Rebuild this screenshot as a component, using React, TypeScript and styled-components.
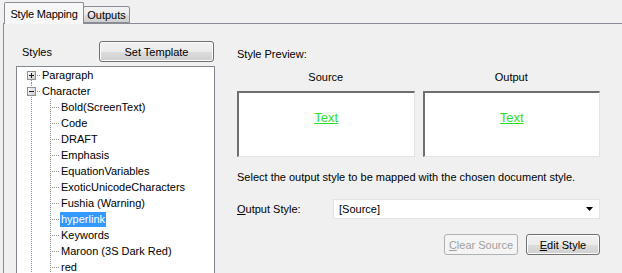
import styled, { createGlobalStyle } from 'styled-components';

const GlobalStyle = createGlobalStyle`
  html, body {
    margin: 0;
    padding: 0;
    background: #f0f0f0;
  }
  body {
    font-family: "Liberation Sans", Arial, sans-serif;
    font-size: 11px;
    color: #000;
  }
`;

const Window = styled.div`
  width: 622px;
  height: 273px;
  overflow: hidden;
  display: flex;
  flex-direction: column;
  background: #f0f0f0;
`;

const TabStrip = styled.div`
  height: 23px;
  display: flex;
  align-items: flex-end;
  padding-left: 4px;
  position: relative;
  z-index: 1;
`;

const Tab = styled.div<{ $active?: boolean }>`
  display: flex;
  align-items: center;
  justify-content: center;
  box-sizing: border-box;
  border: 1px solid #898c95;
  border-bottom: ${({ $active }) => ($active ? 'none' : '1px solid #898c95')};
  height: ${({ $active }) => ($active ? '22px' : '17px')};
  width: ${({ $active }) => ($active ? '80px' : '47px')};
  margin-bottom: ${({ $active }) => ($active ? '-1px' : '0')};
  margin-left: ${({ $active }) => ($active ? '0' : '-1px')};
  padding-top: ${({ $active }) => ($active ? '0' : '1px')};
  border-radius: 2px 2px 0 0;
  letter-spacing: ${({ $active }) => ($active ? '-0.2px' : '0')};
  background: ${({ $active }) =>
    $active ? '#f7f7f7' : 'linear-gradient(#f2f2f2 0%, #ebebeb 50%, #dddddd 51%, #cfcfcf 100%)'};
`;

const Panel = styled.div`
  flex: 1;
  margin-left: 3px;
  border-top: 1px solid #898c95;
  border-left: 1px solid #898c95;
  padding-left: 12px;
  display: grid;
  grid-template-columns: 199px 363px;
  column-gap: 22px;
  min-height: 0;
`;

const LeftColumn = styled.div`
  display: flex;
  flex-direction: column;
  min-height: 0;
`;

const StylesHeader = styled.div`
  height: 42px;
  box-sizing: border-box;
  display: flex;
  align-items: flex-end;
  justify-content: space-between;
  padding: 0 1px 4px 6px;
`;

const StylesLabel = styled.span`
  line-height: 20px;
`;

const Button = styled.button<{ $width: number; $disabled?: boolean }>`
  width: ${({ $width }) => $width}px;
  height: 21px;
  box-sizing: border-box;
  font-family: "Liberation Sans", Arial, sans-serif;
  font-size: 11px;
  padding: 0;
  border-radius: 3px;
  border: 1px solid ${({ $disabled }) => ($disabled ? '#adb2b5' : '#707070')};
  color: ${({ $disabled }) => ($disabled ? '#a0a0a0' : '#000')};
  background: ${({ $disabled }) =>
    $disabled ? '#f4f4f4' : 'linear-gradient(#f2f2f2 0%, #ebebeb 50%, #dddddd 51%, #cfcfcf 100%)'};
  box-shadow: ${({ $disabled }) => ($disabled ? 'none' : 'inset 0 0 0 1px #fcfcfc')};
`;

const Mnemonic = styled.span`
  text-decoration: underline;
`;

const TreeBox = styled.div`
  flex: 1;
  border: 1px solid #828790;
  border-bottom: none;
  background: #fff;
  padding: 0 0 0 5px;
  overflow: hidden;
`;

const TreeRow = styled.div`
  display: flex;
  align-items: center;
  height: 16px;
`;

const TreeLabel = styled.span<{ $selected?: boolean }>`
  line-height: 15px;
  padding: 0 1px;
  white-space: nowrap;
  background: ${({ $selected }) => ($selected ? '#3399ff' : 'transparent')};
  color: ${({ $selected }) => ($selected ? '#fff' : '#000')};
`;

const RightColumn = styled.div`
  display: flex;
  flex-direction: column;
  padding-top: 23px;
`;

const Caption = styled.div`
  line-height: 14px;
`;

const PreviewGrid = styled.div`
  display: grid;
  grid-template-columns: 1fr 1fr;
  column-gap: 8px;
  row-gap: 7px;
  margin-top: 9px;
`;

const PreviewTitle = styled.div`
  text-align: center;
  line-height: 14px;
`;

const PreviewBox = styled.div`
  height: 66px;
  box-sizing: border-box;
  background: #fff;
  border-top: 2px solid #6f6f6f;
  border-left: 2px solid #6f6f6f;
  border-right: 1px solid #e3e3e3;
  border-bottom: 1px solid #e3e3e3;
  display: flex;
  align-items: center;
  justify-content: center;
  padding-bottom: 15px;
`;

const SampleLink = styled.span`
  color: #2ee02e;
  font-size: 13px;
  text-decoration: underline;
`;

const Hint = styled.div`
  line-height: 14px;
  margin-top: 13px;
`;

const FieldRow = styled.div`
  display: grid;
  grid-template-columns: 96px 1fr;
  align-items: center;
  margin-top: 15px;
`;

const Select = styled.div`
  height: 20px;
  box-sizing: border-box;
  border: 1px solid #e3e3e3;
  background: #fff;
  display: flex;
  align-items: center;
  justify-content: space-between;
  padding: 0 6px 0 5px;
`;

const ButtonRow = styled.div`
  display: flex;
  justify-content: flex-end;
  gap: 8px;
  margin-top: 15px;
`;

type Line = 'none' | 'full' | 'down';

const TreeCell = ({ line, branch, box }: { line: Line; branch?: boolean; box?: 'plus' | 'minus' }) => (
  <svg width="19" height="16" style={{ flex: 'none', display: 'block' }}>
    {line !== 'none' && (
      <line
        x1="9.5"
        y1={line === 'down' ? 9 : 0}
        x2="9.5"
        y2="16"
        stroke="#909090"
        strokeDasharray="1 1"
      />
    )}
    {branch && (
      <line x1={box ? 15 : 11} y1="8.5" x2="19" y2="8.5" stroke="#909090" strokeDasharray="1 1" />
    )}
    {box && (
      <g>
        <defs>
          <linearGradient id="exp" x1="0" y1="0" x2="1" y2="1">
            <stop offset="0" stopColor="#ffffff" />
            <stop offset="1" stopColor="#c8c8c8" />
          </linearGradient>
        </defs>
        <rect x="5.5" y="4.5" width="8" height="8" fill="url(#exp)" stroke="#919191" />
        <line x1="7" y1="8.5" x2="12" y2="8.5" stroke="#1a1a1a" />
        {box === 'plus' && <line x1="9.5" y1="6" x2="9.5" y2="11" stroke="#1a1a1a" />}
      </g>
    )}
  </svg>
);

const characterStyles = [
  'Bold(ScreenText)',
  'Code',
  'DRAFT',
  'Emphasis',
  'EquationVariables',
  'ExoticUnicodeCharacters',
  'Fushia (Warning)',
  'hyperlink',
  'Keywords',
  'Maroon (3S Dark Red)',
  'red',
];

export default function App() {
  return (
    <Window>
      <GlobalStyle />
      <TabStrip>
        <Tab $active>Style Mapping</Tab>
        <Tab>Outputs</Tab>
      </TabStrip>
      <Panel>
        <LeftColumn>
          <StylesHeader>
            <StylesLabel>Styles</StylesLabel>
            <Button $width={115}>Set Template</Button>
          </StylesHeader>
          <TreeBox>
            <TreeRow>
              <TreeCell line="down" branch box="plus" />
              <TreeLabel>Paragraph</TreeLabel>
            </TreeRow>
            <TreeRow>
              <TreeCell line="full" branch box="minus" />
              <TreeLabel>Character</TreeLabel>
            </TreeRow>
            {characterStyles.map((name) => (
              <TreeRow key={name}>
                <TreeCell line="full" />
                <TreeCell line="full" branch />
                <TreeLabel $selected={name === 'hyperlink'}>{name}</TreeLabel>
              </TreeRow>
            ))}
          </TreeBox>
        </LeftColumn>
        <RightColumn>
          <Caption>Style Preview:</Caption>
          <PreviewGrid>
            <PreviewTitle>Source</PreviewTitle>
            <PreviewTitle>Output</PreviewTitle>
            <PreviewBox>
              <SampleLink>Text</SampleLink>
            </PreviewBox>
            <PreviewBox>
              <SampleLink>Text</SampleLink>
            </PreviewBox>
          </PreviewGrid>
          <Hint>Select the output style to be mapped with the chosen document style.</Hint>
          <FieldRow>
            <span>
              <Mnemonic>O</Mnemonic>utput Style:
            </span>
            <Select>
              <span>[Source]</span>
              <svg width="7" height="4">
                <path d="M0 0 H7 L3.5 4 Z" fill="#000" />
              </svg>
            </Select>
          </FieldRow>
          <ButtonRow>
            <Button $width={74} $disabled>
              <Mnemonic>C</Mnemonic>lear Source
            </Button>
            <Button $width={74}>
              <Mnemonic>E</Mnemonic>dit Style
            </Button>
          </ButtonRow>
        </RightColumn>
      </Panel>
    </Window>
  );
}
